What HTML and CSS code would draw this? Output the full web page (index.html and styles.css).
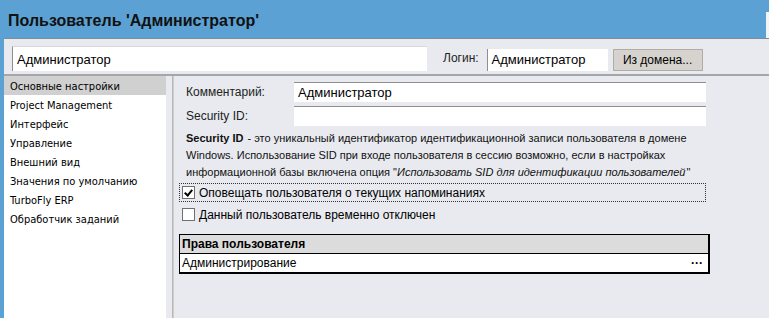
FILE: index.html
```html
<!DOCTYPE html>
<html lang="ru">
<head>
    <meta charset="UTF-8">
    <title>Пользователь 'Администратор'</title>
    <link rel="stylesheet" href="styles.css">
</head>
<body>
    <div class="window">
        <div class="titlebar">
            <h1 class="title">Пользователь 'Администратор'</h1>
            <div class="edge-tab"></div>
        </div>
        <div class="frame">
            <div class="top-row">
                <div class="field name-field">Администратор</div>
                <span class="login-label">Логин:</span>
                <div class="field login-field">Администратор</div>
                <button class="btn">Из домена...</button>
            </div>
            <div class="main">
                <ul class="nav">
                    <li class="active">Основные настройки</li>
                    <li>Project Management</li>
                    <li>Интерфейс</li>
                    <li>Управление</li>
                    <li>Внешний вид</li>
                    <li>Значения по умолчанию</li>
                    <li>TurboFly ERP</li>
                    <li>Обработчик заданий</li>
                </ul>
                <div class="splitter"></div>
                <div class="content">
                    <div class="form-row">
                        <span class="form-label">Комментарий:</span>
                        <div class="field wide">Администратор</div>
                    </div>
                    <div class="form-row">
                        <span class="form-label">Security ID:</span>
                        <div class="field wide"></div>
                    </div>
                    <p class="hint"><b>Security ID</b> - это уникальный идентификатор идентификационной записи пользователя в домене<br>Windows. Использование SID при входе пользователя в сессию возможно, если в настройках<br>информационной базы включена опция "<i>Использовать SID для идентификации пользователей</i>"</p>
                    <label class="check focused"><span class="box checked"></span>Оповещать пользователя о текущих напоминаниях</label>
                    <label class="check"><span class="box"></span>Данный пользователь временно отключен</label>
                    <div class="grid">
                        <div class="grid-head">Права пользователя</div>
                        <div class="grid-row">Администрирование<span class="dots">···</span></div>
                    </div>
                </div>
            </div>
        </div>
    </div>
</body>
</html>
```

FILE: styles.css
```css
html, body {
    margin: 0;
    padding: 0;
}
body {
    width: 769px;
    height: 318px;
    overflow: hidden;
    background: #5ba1d4;
    font-family: "Liberation Sans", Arial, sans-serif;
    font-size: 12px;
    color: #000;
}
.window {
    display: flex;
    flex-direction: column;
    height: 318px;
}
.titlebar {
    height: 38px;
    display: flex;
    align-items: center;
    justify-content: space-between;
    box-sizing: border-box;
    padding: 4px 0 0 8px;
}
.title {
    margin: 0;
    font-size: 16px;
    font-weight: bold;
    color: #111;
}
.edge-tab {
    width: 3px;
    height: 26px;
    margin-top: 8px;
    background: #f2f4f6;
}
.frame {
    flex: 1;
    margin-left: 4px;
    background: #e8eaef;
    border-top: 1px solid #7f8d99;
    display: flex;
    flex-direction: column;
}
.top-row {
    display: flex;
    align-items: center;
    height: 37px;
    box-sizing: border-box;
    padding: 3px 0 0 8px;
    border-bottom: 2px solid #a4a6aa;
}
.field {
    background: #fff;
    box-sizing: border-box;
    padding: 0 4px;
    white-space: nowrap;
    overflow: hidden;
}
.name-field {
    width: 415px;
    height: 25px;
    line-height: 25px;
    font-size: 13px;
    border-left: 1px solid #8f8f8f;
    border-top: 1px solid #d8d8d8;
}
.login-label {
    margin-left: 16px;
    font-size: 12px;
    color: #222;
}
.login-field {
    margin-left: 8px;
    width: 121px;
    height: 22px;
    line-height: 22px;
    font-size: 13px;
    border-left: 1px solid #8f8f8f;
    margin-top: 3px;
}
.btn {
    margin: 3px 0 0 5px;
    width: 90px;
    height: 22px;
    background: #d6d3ce;
    border: 1px solid #b0ada8;
    font-family: inherit;
    font-size: 12px;
    color: #000;
    padding: 0;
}
.main {
    flex: 1;
    display: flex;
}
.nav {
    list-style: none;
    margin: 0;
    padding: 0;
    width: 162px;
    background: #fff;
    font-family: "DejaVu Sans Condensed", "DejaVu Sans", sans-serif;
    font-size: 11px;
}
.nav li {
    height: 17px;
    line-height: 17px;
    padding: 2px 0 0 6px;
}
.nav li.active {
    background: #d0d0d0;
}
.splitter {
    width: 6px;
    background: #e8eaef;
    border-right: 1px solid #b8b8b8;
}
.content {
    flex: 1;
    border-left: 1px solid #d0ccc6;
    padding: 6px 0 0 12px;
}
.form-row {
    display: flex;
    align-items: center;
    margin-bottom: 4px;
}
.form-label {
    width: 108px;
    font-size: 12px;
    color: #222;
}
.wide {
    width: 412px;
    height: 20px;
    line-height: 19px;
    font-size: 13px;
    border-top: 1px solid #8f8f8f;
}
.hint {
    margin: 2px 0 2px;
    width: 530px;
    font-size: 11px;
    line-height: 17px;
    color: #111;
}
.hint b,
.hint i {
    margin-right: 1px;
}
.check {
    display: flex;
    align-items: center;
    width: 527px;
    height: 19px;
    margin-left: -7px;
    padding-left: 2px;
    box-sizing: border-box;
    font-size: 12px;
    border: 1px dotted transparent;
}
.check.focused {
    border-color: #333;
    margin-bottom: 3px;
}
.box {
    width: 11px;
    height: 11px;
    border: 1px solid #707070;
    background: #fff;
    margin-right: 4px;
    position: relative;
}
.box.checked::after {
    content: "";
    position: absolute;
    left: 3px;
    top: 1px;
    width: 3px;
    height: 6px;
    border: solid #000;
    border-width: 0 2px 2px 0;
    transform: rotate(40deg);
}
.grid {
    margin: 10px 0 0 -7px;
    width: 528px;
    border: 2px solid #000;
    border-width: 1px 2px 2px 1px;
    font-size: 12px;
}
.grid-head {
    height: 18px;
    line-height: 18px;
    padding-left: 2px;
    background: #dcdcdc;
    font-weight: bold;
    border-bottom: 1px solid #000;
}
.grid-row {
    height: 18px;
    line-height: 18px;
    padding: 0 5px 0 2px;
    background: #fff;
    display: flex;
    justify-content: space-between;
}
.dots {
    font-weight: bold;
}
```
